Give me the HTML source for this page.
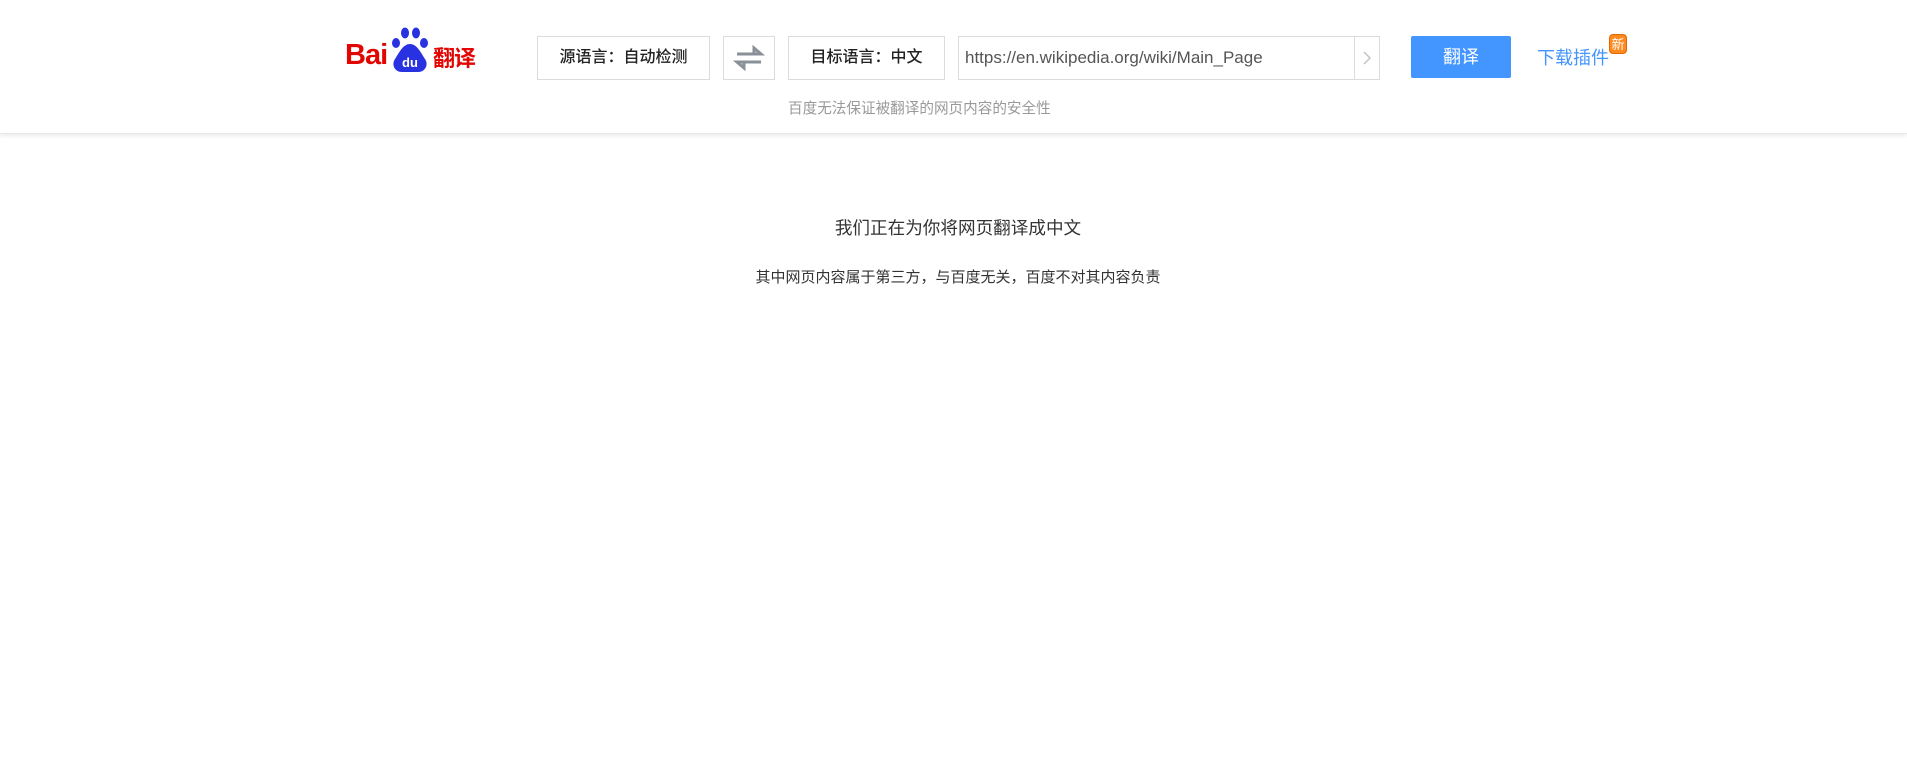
<!DOCTYPE html>
<html><head><meta charset="utf-8"><style>
*{margin:0;padding:0;box-sizing:border-box}
body{width:1907px;height:762px;background:#fff;font-family:"Liberation Sans","Noto Sans CJK SC",sans-serif;position:relative;overflow:hidden}
.hdr{position:absolute;left:0;top:0;width:1907px;height:134px;background:#fff;box-shadow:0 2px 4px rgba(0,0,0,.08);border-bottom:1px solid #e8e8e8}
.box{position:absolute;top:36px;height:44px;border:1px solid #dcdcdc;background:#fff;font-size:16px;color:#222;line-height:42px;text-align:center;font-weight:500}
.abs{position:absolute}
</style></head><body>
<div class="hdr">
 <div class="abs" style="left:345px;top:27px;width:130px;height:48px">
  <span class="abs" style="left:0;top:12px;font:bold 29px 'Liberation Sans',sans-serif;color:#e10602;letter-spacing:-1px">Bai</span>
  <svg class="abs" style="left:42px;top:0" width="46" height="46" viewBox="0 0 46 46">
   <ellipse cx="9" cy="16" rx="4" ry="5" fill="#2932e1"/><ellipse cx="18" cy="6" rx="4" ry="5.5" fill="#2932e1"/><ellipse cx="29" cy="6" rx="4" ry="5.5" fill="#2932e1"/><ellipse cx="37" cy="16" rx="4" ry="5" fill="#2932e1"/>
   <path d="M23 17 C16 17 12 26 8 32 C4 38 8 45 15 45 L31 45 C38 45 42 38 38 32 C34 26 30 17 23 17Z" fill="#2932e1"/>
   <text x="23" y="40" font-family="Liberation Sans" font-weight="bold" font-size="13" fill="#fff" text-anchor="middle">du</text>
  </svg>
  <span class="abs" style="left:88px;top:14px;font:bold 22px 'Noto Sans CJK SC',sans-serif;color:#e10602;letter-spacing:-1px">翻译</span>
 </div>
 <div class="box" style="left:537px;width:173px">源语言：自动检测</div>
 <div class="box" style="left:723px;width:52px">
  <svg width="50" height="42" viewBox="0 0 50 42"><path d="M13 17 H37 L30 11 V17 M37 25 H13 L20 31 V25" stroke="#8a9099" stroke-width="3" fill="none"/></svg>
 </div>
 <div class="box" style="left:788px;width:157px">目标语言：中文</div>
 <div class="box" style="left:958px;width:422px;text-align:left;padding-left:6px;font-size:17px;color:#555;font-weight:normal">https://en.wikipedia.org/wiki/Main_Page
  <div class="abs" style="left:395px;top:0;width:1px;height:42px;background:#dcdcdc"></div>
  <svg class="abs" style="left:400px;top:13px" width="16" height="16" viewBox="0 0 16 16"><path d="M5 2 L11 8 L5 14" stroke="#c4c4c4" stroke-width="1.5" fill="none"/></svg>
 </div>
 <div class="abs" style="left:1411px;top:36px;width:100px;height:42px;background:#4395ff;border-radius:2px;color:#fff;font-size:18px;line-height:42px;text-align:center">翻译</div>
 <div class="abs" style="left:1537px;top:44px;font-size:18px;color:#4395ff">下载插件</div>
 <div class="abs" style="left:1609px;top:34px;width:18px;height:20px;background:#ff8a1f;border-radius:4px;color:#fff;font-size:13px;line-height:20px;text-align:center;border:1px solid #e06a00">新</div>
 <div class="abs" style="left:788px;top:97px;font-size:14.6px;color:#999">百度无法保证被翻译的网页内容的安全性</div>
</div>
<div class="abs" style="left:0;width:1916px;top:215px;text-align:center;font-size:17.6px;color:#333">我们正在为你将网页翻译成中文</div>
<div class="abs" style="left:0;width:1916px;top:266px;text-align:center;font-size:15px;color:#333">其中网页内容属于第三方，与百度无关，百度不对其内容负责</div>
</body></html>
